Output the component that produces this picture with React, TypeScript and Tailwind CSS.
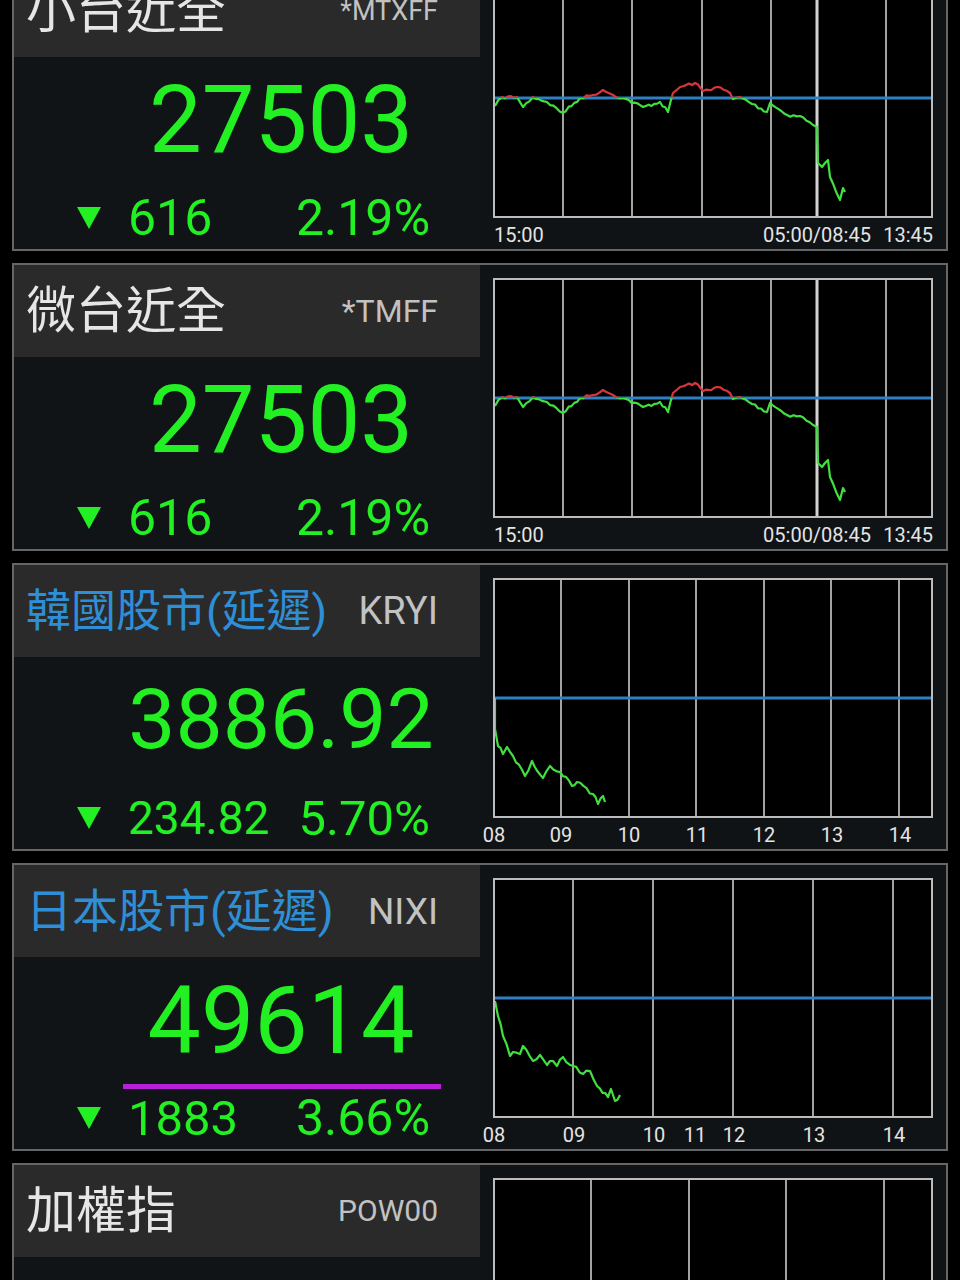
import React from 'react';

type Pt = [number, number];
type Label = { text: string; x: number; align: 'left' | 'center' | 'right' };

interface Quote {
  title: string;
  titleClass: string;
  code: string;
  codeClass: string;
  price?: string;
  priceClass?: string;
  change?: string;
  pct?: string;
  subClass?: string;
  pctClass?: string;
  underline?: boolean;
  grid: number[];
  thick?: number;
  labels: Label[];
  points?: Pt[];
  seed: number;
  amp?: number;
}

// chart inner area is 436 x 236, previous close sits at y = 118
const W = 436;
const H = 236;
const BASE = 118;

const twPoints: Pt[] = [
  [0, 126], [7, 117], [22, 117], [28, 127], [38, 117], [52, 122], [68, 133], [85, 118],
  [98, 115], [108, 110], [118, 115], [128, 118], [148, 127], [165, 122], [173, 132],
  [178, 113], [185, 107], [200, 103], [208, 111], [222, 107], [235, 113], [238, 119],
  [245, 117], [272, 132], [275, 123], [292, 135], [305, 136], [318, 145], [322, 147],
  [323, 183], [327, 187], [333, 180], [335, 197], [345, 220], [348, 208], [350, 212],
];

const twGrid = [68, 137, 207, 276, 391];
const twLabels: Label[] = [
  { text: '15:00', x: 1, align: 'left' },
  { text: '05:00/08:45', x: 324, align: 'center' },
  { text: '13:45', x: 0, align: 'right' },
];

const quotes: Quote[] = [
  {
    title: '小台近全',
    titleClass: 'text-[50px] text-[#e6e6e6]',
    code: '*MTXFF',
    codeClass: 'text-[27px]',
    price: '27503',
    priceClass: 'text-[94px]',
    change: '616',
    pct: '2.19%',
    subClass: 'text-[50px]',
    pctClass: 'text-[50px]',
    grid: twGrid,
    thick: 322,
    labels: twLabels,
    points: twPoints,
    seed: 7,
    amp: 1.6,
  },
  {
    title: '微台近全',
    titleClass: 'text-[50px] text-[#e6e6e6]',
    code: '*TMFF',
    codeClass: 'text-[32px]',
    price: '27503',
    priceClass: 'text-[94px]',
    change: '616',
    pct: '2.19%',
    subClass: 'text-[50px]',
    pctClass: 'text-[50px]',
    grid: twGrid,
    thick: 322,
    labels: twLabels,
    points: twPoints,
    seed: 7,
    amp: 1.6,
  },
  {
    title: '韓國股市(延遲)',
    titleClass: 'text-[45px] text-[#2e8fd6]',
    code: 'KRYI',
    codeClass: 'text-[38px]',
    price: '3886.92',
    priceClass: 'text-[84px]',
    change: '234.82',
    pct: '5.70%',
    subClass: 'text-[46px]',
    pctClass: 'text-[49px]',
    grid: [66, 134, 201, 269, 336, 404],
    labels: [
      { text: '08', x: 1, align: 'center' },
      { text: '09', x: 68, align: 'center' },
      { text: '10', x: 136, align: 'center' },
      { text: '11', x: 204, align: 'center' },
      { text: '12', x: 271, align: 'center' },
      { text: '13', x: 339, align: 'center' },
      { text: '14', x: 407, align: 'center' },
    ],
    points: [
      [0, 117], [0, 149], [3, 166], [8, 174], [12, 167], [30, 196], [37, 181], [48, 198],
      [55, 186], [65, 192], [77, 206], [82, 202], [98, 214], [103, 224], [108, 216], [110, 222],
    ],
    seed: 19,
    amp: 2.2,
  },
  {
    title: '日本股市(延遲)',
    titleClass: 'text-[46px] text-[#2e8fd6]',
    code: 'NIXI',
    codeClass: 'text-[37px]',
    price: '49614',
    priceClass: 'text-[95px]',
    change: '1883',
    pct: '3.66%',
    subClass: 'text-[49px]',
    pctClass: 'text-[50px]',
    underline: true,
    grid: [78, 158, 238, 318, 398],
    labels: [
      { text: '08', x: 1, align: 'center' },
      { text: '09', x: 81, align: 'center' },
      { text: '10', x: 161, align: 'center' },
      { text: '11', x: 202, align: 'center' },
      { text: '12', x: 241, align: 'center' },
      { text: '13', x: 321, align: 'center' },
      { text: '14', x: 401, align: 'center' },
    ],
    points: [
      [0, 121], [3, 136], [8, 156], [15, 176], [18, 172], [25, 174], [28, 166], [38, 181],
      [45, 175], [52, 185], [58, 181], [62, 186], [68, 177], [78, 186], [88, 194], [95, 191],
      [102, 206], [113, 217], [116, 209], [120, 221], [125, 215],
    ],
    seed: 31,
    amp: 2.2,
  },
  {
    title: '加權指',
    titleClass: 'text-[50px] text-[#e6e6e6]',
    code: 'POW00',
    codeClass: 'text-[30px]',
    grid: [96, 194, 291, 389],
    labels: [],
    seed: 1,
  },
];

function rng(seed: number) {
  let s = seed;
  return () => {
    s = (s * 16807) % 2147483647;
    return (s - 1) / 2147483646;
  };
}

// interpolate the key points and add a little tick noise
function buildPath(pts: Pt[], seed: number, amp: number) {
  const rand = rng(seed);
  const out: string[] = [];
  for (let i = 0; i < pts.length - 1; i++) {
    const [x0, y0] = pts[i];
    const [x1, y1] = pts[i + 1];
    const n = Math.max(1, Math.round((x1 - x0) / 3));
    for (let k = 0; k < n; k++) {
      const t = k / n;
      const jitter = k === 0 ? 0 : (rand() - 0.5) * amp * 2;
      out.push(`${(x0 + (x1 - x0) * t).toFixed(1)} ${(y0 + (y1 - y0) * t + jitter).toFixed(1)}`);
    }
  }
  const last = pts[pts.length - 1];
  out.push(`${last[0]} ${last[1]}`);
  return 'M' + out.join(' L');
}

const Chart: React.FC<{ q: Quote; id: string }> = ({ q, id }) => {
  const d = q.points ? buildPath(q.points, q.seed, q.amp ?? 2) : '';
  return (
    <svg width={W} height={H} viewBox={`0 0 ${W} ${H}`} className="block">
      <defs>
        <clipPath id={`${id}-up`}>
          <rect x="0" y="0" width={W} height={BASE} />
        </clipPath>
        <clipPath id={`${id}-dn`}>
          <rect x="0" y={BASE} width={W} height={H - BASE} />
        </clipPath>
      </defs>
      {q.grid.map((x) => (
        <line key={x} x1={x} x2={x} y1={0} y2={H} stroke="#a2a2a2" strokeWidth={2} />
      ))}
      {q.thick && <line x1={q.thick} x2={q.thick} y1={0} y2={H} stroke="#d2d2d2" strokeWidth={3} />}
      <line x1={0} x2={W} y1={BASE} y2={BASE} stroke="#2f7fc2" strokeWidth={3} />
      {d && (
        <>
          <path d={d} fill="none" stroke="#d8363a" strokeWidth={2.2} strokeLinejoin="round" clipPath={`url(#${id}-up)`} />
          <path d={d} fill="none" stroke="#3fe03f" strokeWidth={2.2} strokeLinejoin="round" clipPath={`url(#${id}-dn)`} />
        </>
      )}
    </svg>
  );
};

const QuoteCard: React.FC<{ q: Quote; idx: number }> = ({ q, idx }) => (
  <div className="flex h-[288px] border-2 border-[#666666] bg-[#101315]">
    <div className="flex w-[466px] flex-col">
      <div className="flex h-[92px] items-center justify-between bg-[#2a2a2a] pl-[12px] pr-[42px]">
        <span className={`${q.titleClass} leading-none whitespace-nowrap`}>{q.title}</span>
        <span className={`${q.codeClass} leading-none text-[#c2c2c2]`}>{q.code}</span>
      </div>
      <div className="flex flex-1 flex-col bg-[#111417]">
        <div className="flex h-[126px] items-center">
          <div className="ml-[108px] w-[318px] text-center">
            {q.price && <span className={`${q.priceClass} leading-none text-[#23f023]`}>{q.price}</span>}
          </div>
        </div>
        <div className="h-[8px]">
          {q.underline && <div className="ml-[109px] mt-[1px] h-[5px] w-[318px] bg-[#b81fd8]" />}
        </div>
        {q.change && (
          <div className="flex h-[54px] items-center pl-[63px] pr-[50px]">
            <svg width="24" height="22" viewBox="0 0 24 22" className="shrink-0">
              <polygon points="0,0 24,0 12,22" fill="#23f023" />
            </svg>
            <span className={`${q.subClass} ml-[27px] flex-1 leading-none text-[#23f023]`}>{q.change}</span>
            <span className={`${q.pctClass} leading-none text-[#23f023]`}>{q.pct}</span>
          </div>
        )}
      </div>
    </div>
    <div className="flex-1 pl-[13px] pt-[13px]">
      <div className="h-[240px] w-[440px] border-2 border-[#bcbcbc] bg-black">
        <Chart q={q} id={`c${idx}`} />
      </div>
      <div className="relative h-[31px] w-[440px]">
        {q.labels.map((l) =>
          l.align === 'right' ? (
            <span key={l.text} className="absolute right-0 top-[7px] text-[20px] leading-none text-[#e4e4e4] whitespace-nowrap">
              {l.text}
            </span>
          ) : (
            <span
              key={l.text}
              className={`absolute top-[7px] text-[20px] leading-none text-[#e4e4e4] whitespace-nowrap ${
                l.align === 'center' ? '-translate-x-1/2' : ''
              }`}
              style={{ left: l.x }}
            >
              {l.text}
            </span>
          )
        )}
      </div>
    </div>
  </div>
);

const App: React.FC = () => (
  <div className="h-[1280px] overflow-hidden bg-black font-['Roboto','Noto_Sans_CJK_TC',sans-serif]">
    <div className="-mt-[37px] flex flex-col gap-[12px] px-[12px]">
      {quotes.map((q, i) => (
        <QuoteCard key={i} q={q} idx={i} />
      ))}
    </div>
  </div>
);

export default App;
